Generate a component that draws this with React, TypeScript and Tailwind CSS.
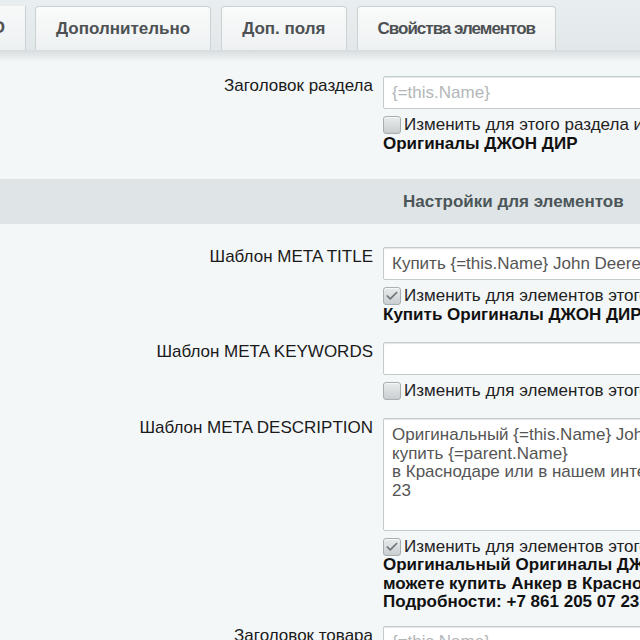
import { Check } from 'lucide-react'

const Checkbox = ({ checked }: { checked?: boolean }) => (
  <span className="w-[18px] h-[18px] shrink-0 rounded-[3px] border border-[#a7afb1] bg-gradient-to-b from-[#e9eced] to-[#c9ced0] flex items-center justify-center shadow-[inset_0_1px_0_#f6f7f7]">
    {checked && <Check size={14} strokeWidth={3} className="text-[#6d7678]" />}
  </span>
)

const Row = ({ label, children, top = 9 }: { label: string; children: React.ReactNode; top?: number }) => (
  <div className={top === 9 ? 'flex py-[9px]' : 'flex pt-[5px] pb-[9px]'}>
    <div className="w-[373px] shrink-0 text-right leading-[19px] text-[#1a1a1a]">{label}</div>
    <div className="ml-[10px] w-[560px] shrink-0 flex flex-col">{children}</div>
  </div>
)

const Field = ({ value, placeholder }: { value?: string; placeholder?: string }) => (
  <div className="h-[33px] bg-white border border-[#c4cbcd] rounded-[2px] shadow-[inset_0_1px_1px_#e3e7e8] px-[8px] flex items-center whitespace-nowrap">
    {value ? <span className="text-[#555]">{value}</span> : <span className="text-[#b2b7b9]">{placeholder}</span>}
  </div>
)

const Toggle = ({ checked, text }: { checked?: boolean; text: string }) => (
  <div className="mt-[7px] flex items-center gap-[3px] leading-[18px] whitespace-nowrap text-[#222]">
    <Checkbox checked={checked} />
    <span>{text}</span>
  </div>
)

const tabs = [
  { title: 'Дополнительно', cls: '' },
  { title: 'Доп. поля', cls: '' },
  { title: 'Свойства элементов', cls: 'tracking-[-1px]' },
]

export default function App() {
  return (
    <div className="w-[640px] h-[640px] overflow-hidden bg-[#f4f7f8] text-[17px] font-['Liberation_Sans',Arial,sans-serif]">
      {/* Tabs */}
      <div className="h-[50px] bg-gradient-to-b from-[#e9eef0] to-[#e2e8ea] flex items-end">
        <div className="w-[26px] h-[44px] shrink-0 overflow-hidden border-r border-[#cbd2d4] bg-gradient-to-b from-[#f7f9f9] to-[#eef1f2] flex items-center justify-end pr-[20px]">
          <span className="font-bold text-[17px] text-[#4d5153]">SEO</span>
        </div>
        <div className="flex items-end gap-[10px] ml-[9px]">
          {tabs.map(t => (
            <div
              key={t.title}
              className="h-[44px] px-[20px] flex items-center rounded-t-[4px] border border-b-0 border-[#cbd2d4] bg-gradient-to-b from-[#fafbfb] to-[#eef1f2] font-bold text-[17px] text-[#4d5153] whitespace-nowrap"
            >
              <span className={t.cls}>{t.title}</span>
            </div>
          ))}
        </div>
      </div>
      <div className="h-[12px] bg-gradient-to-b from-[#d6dcde] to-[#f4f7f8]" />

      <div className="pt-[5px]">
        <Row label="Заголовок раздела">
          <Field placeholder="{=this.Name}" />
          <Toggle text="Изменить для этого раздела и его подразделов" />
          <div className="font-bold leading-[19px] text-[#111] whitespace-nowrap">Оригиналы ДЖОН ДИР</div>
        </Row>

        <div className="mt-[17px] mb-[14px] h-[45px] bg-[#dfe5e7] flex items-center pl-[403px] whitespace-nowrap">
          <span className="font-bold text-[#4c5659]">Настройки для элементов</span>
        </div>

        <Row label="Шаблон META TITLE">
          <Field value="Купить {=this.Name} John Deere в Краснодаре" />
          <Toggle checked text="Изменить для элементов этого раздела и подразделов" />
          <div className="font-bold leading-[19px] text-[#111] whitespace-nowrap">Купить Оригиналы ДЖОН ДИР John Deere в Краснодаре</div>
        </Row>

        <Row label="Шаблон META KEYWORDS">
          <Field />
          <Toggle text="Изменить для элементов этого раздела и подразделов" />
        </Row>

        <Row label="Шаблон META DESCRIPTION">
          <div className="h-[113px] bg-white border border-[#c4cbcd] rounded-[2px] shadow-[inset_0_1px_1px_#e3e7e8] px-[8px] pt-[7px] leading-[18.5px] text-[#555] whitespace-nowrap">
            <div>Оригинальный {'{=this.Name}'} John Deere. Вы можете</div>
            <div>купить {'{=parent.Name}'}</div>
            <div>в Краснодаре или в нашем интернет-магазине. Подробности: +7 861 205 07</div>
            <div>23</div>
          </div>
          <Toggle checked text="Изменить для элементов этого раздела и подразделов" />
          <div className="font-bold leading-[18.5px] text-[#111] whitespace-nowrap">
            <div>Оригинальный Оригиналы ДЖОН ДИР John Deere. Вы</div>
            <div>можете купить Анкер в Краснодаре или в нашем интернет-магазине.</div>
            <div>Подробности: +7 861 205 07 23</div>
          </div>
        </Row>

        <Row label="Заголовок товара" top={5}>
          <Field placeholder="{=this.Name}" />
        </Row>
      </div>
    </div>
  )
}
